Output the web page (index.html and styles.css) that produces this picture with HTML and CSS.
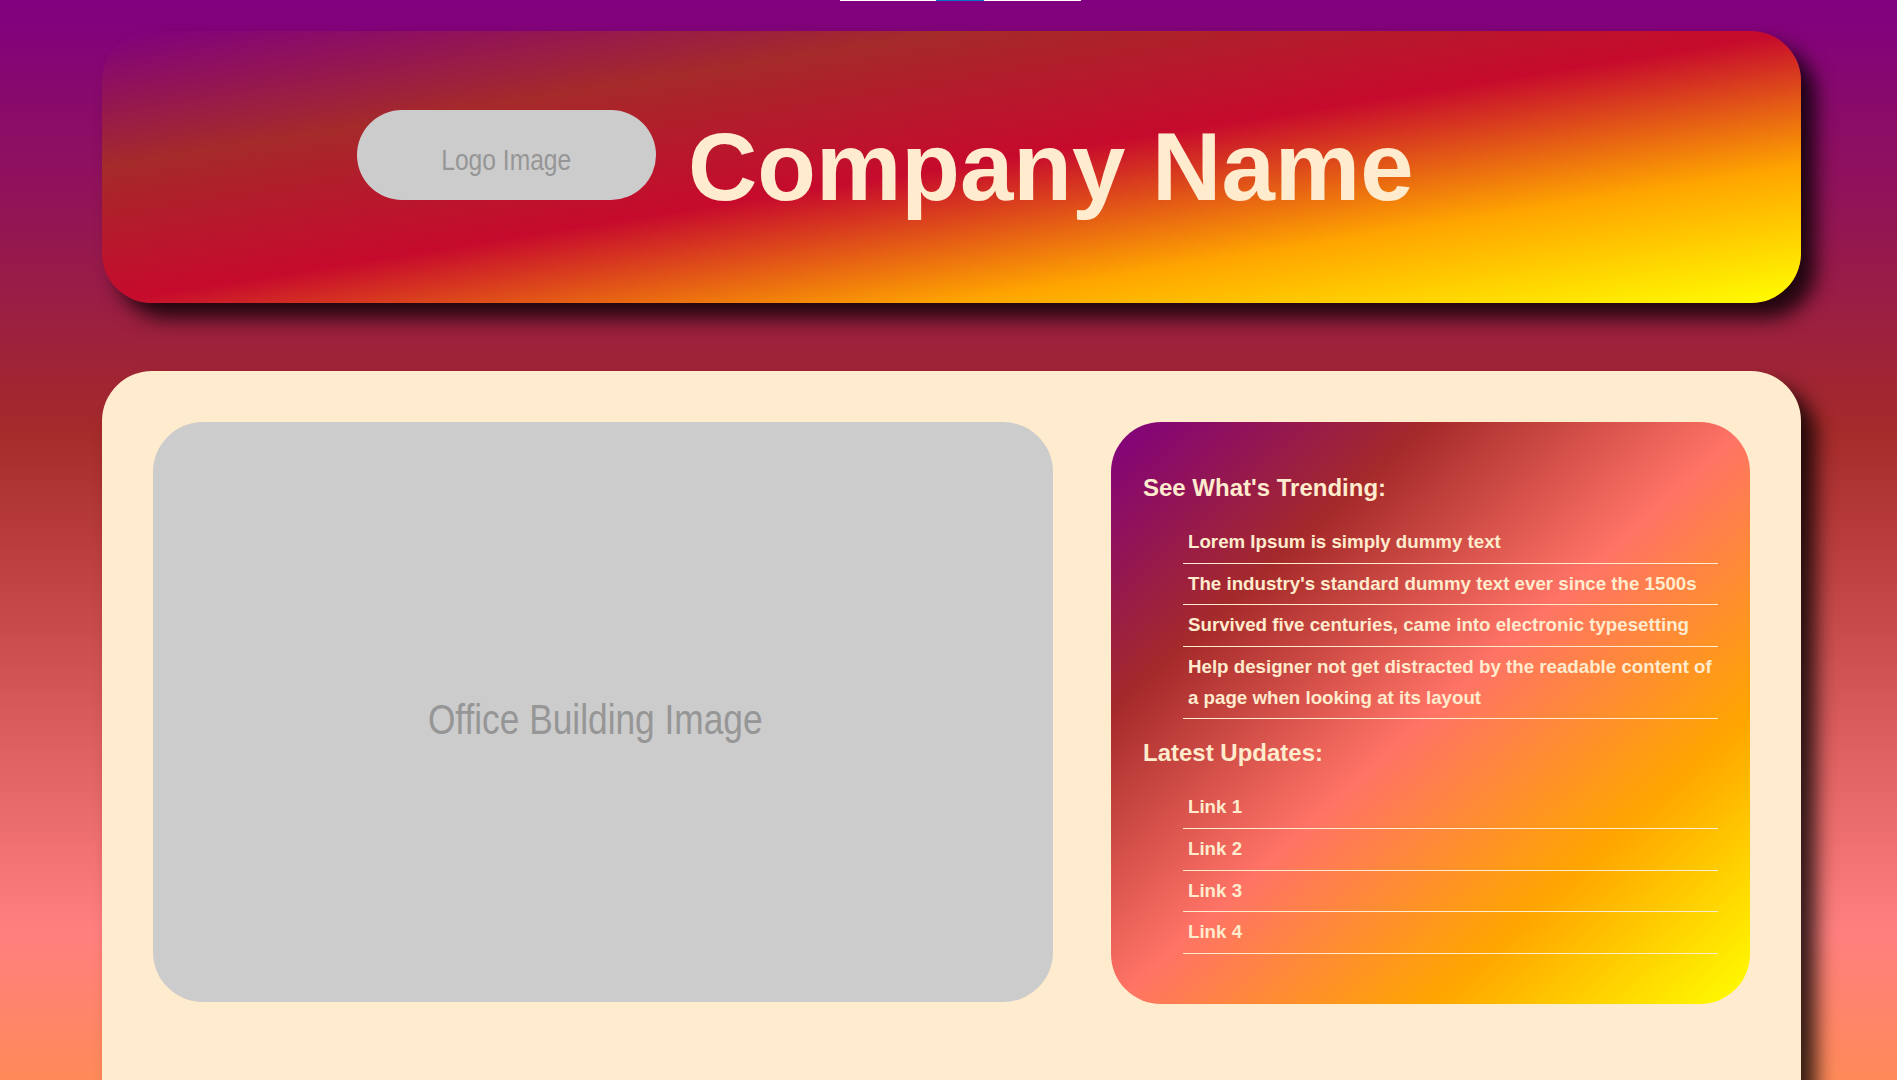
FILE: index.html
```html
<!DOCTYPE html>
<html lang="en">
<head>
<meta charset="utf-8">
<title>Company Name</title>
<link rel="stylesheet" href="styles.css">
</head>
<body>
<div class="topbar"><span class="topbar-thumb"></span></div>
<header class="site-header">
  <div class="brand">
    <div class="logo"><span class="placeholder-text">Logo Image</span></div>
    <h1 class="company">Company Name</h1>
  </div>
</header>
<main class="content-card">
  <div class="office-image"><span class="placeholder-text office-text">Office Building Image</span></div>
  <aside class="sidebar">
    <h2 class="sidebar-title">See What's Trending:</h2>
    <ul class="sidebar-list">
      <li>Lorem Ipsum is simply dummy text</li>
      <li>The industry's standard dummy text ever since the 1500s</li>
      <li>Survived five centuries, came into electronic typesetting</li>
      <li>Help designer not get distracted by the readable content of a page when looking at its layout</li>
    </ul>
    <h2 class="sidebar-title">Latest Updates:</h2>
    <ul class="sidebar-list">
      <li>Link 1</li>
      <li>Link 2</li>
      <li>Link 3</li>
      <li>Link 4</li>
    </ul>
  </aside>
</main>
</body>
</html>
```
FILE: styles.css
```css
html {
  background: linear-gradient(to bottom, #800080 0px, #a52a2a 430px, #ff7f7f 930px, #ffa500 1430px, #ffff00 1930px);
}

body {
  margin: 0;
  padding: 0 96px 0 102px;
  font-family: "Liberation Sans", Arial, sans-serif;
}

.topbar {
  height: 1px;
  width: 241px;
  margin-left: 738px;
  background: #ffffff;
  display: flex;
}

.topbar-thumb {
  margin-left: 96px;
  width: 48px;
  background: #0a6ecc;
}

.site-header {
  margin-top: 30px;
  height: 272px;
  box-sizing: border-box;
  padding: 79px 0 0 255px;
  border-radius: 50px;
  background: linear-gradient(to bottom right, #800080 0%, #a52a2a 25%, #c60a2d 50%, #ffa500 75%, #ffff00 100%);
  box-shadow: 15px 15px 20px rgba(0, 0, 0, 0.8);
}

.brand {
  display: flex;
  align-items: flex-end;
  gap: 32px;
}

.placeholder-text {
  display: inline-block;
  white-space: nowrap;
  transform: scaleX(0.82);
}

.office-text {
  transform: scaleX(0.84);
}

.logo {
  width: 299px;
  height: 90px;
  margin-bottom: 22px;
  box-sizing: border-box;
  padding-top: 9px;
  border-radius: 45px;
  background: #cccccc;
  color: #969696;
  font-family: "Liberation Sans", Arial, sans-serif;
  font-size: 30px;
  display: flex;
  align-items: center;
  justify-content: center;
}

.company {
  margin: 0;
  font-size: 96px;
  font-weight: bold;
  color: #ffebcd;
  white-space: nowrap;
}

.content-card {
  margin-top: 68px;
  padding: 51px 51px 220px;
  border-radius: 50px;
  background: #ffebcd;
  box-shadow: 15px 15px 20px rgba(0, 0, 0, 0.8);
  display: flex;
  justify-content: space-between;
  align-items: flex-start;
}

.office-image {
  width: 900px;
  height: 580px;
  flex: none;
  box-sizing: border-box;
  padding: 16px 16px 0 0;
  border-radius: 50px;
  background: #cccccc;
  color: #969696;
  font-family: "Liberation Sans", Arial, sans-serif;
  font-size: 42px;
  display: flex;
  align-items: center;
  justify-content: center;
}

.sidebar {
  width: 639px;
  flex: none;
  box-sizing: border-box;
  padding: 32px 32px 34px;
  border-radius: 50px;
  background: linear-gradient(to bottom right, #800080 0%, #a52a2a 25%, #ff7366 50%, #ffa500 75%, #ffff00 100%);
  color: #ffebcd;
}

.sidebar-title {
  margin: 19.92px 0;
  font-size: 24px;
  font-weight: bold;
}

.sidebar-list {
  list-style: none;
  margin: 16px 0;
  padding-left: 40px;
}

.sidebar-list li {
  padding: 5px;
  font-size: 18.72px;
  font-weight: bold;
  line-height: 30.7px;
  border-bottom: 1px solid #ffebcd;
}
```
